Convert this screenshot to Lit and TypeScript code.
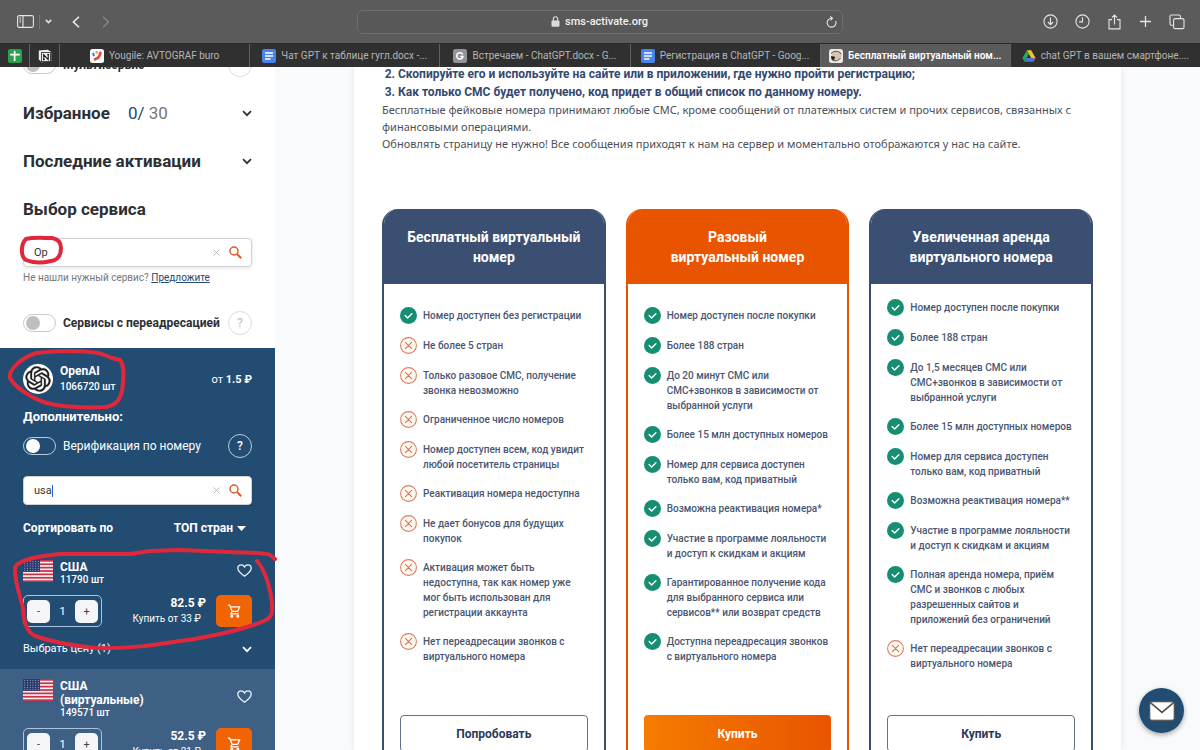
import { LitElement, html, css, svg, nothing } from "lit";
import { customElement, property } from "lit/decorators.js";

const check = html`<svg class="mark" viewBox="0 0 17 17" aria-hidden="true">
  <circle cx="8.5" cy="8.5" r="8.5" fill="#178e72" />
  <path d="M5.2 8.6l2.4 2.3 4.3-4.2" fill="none" stroke="#fff" stroke-width="1.4" stroke-linecap="round" stroke-linejoin="round" />
</svg>`;

const cross = html`<svg class="mark" viewBox="0 0 17 17" aria-hidden="true">
  <circle cx="8.5" cy="8.5" r="7.9" fill="#fffaf2" stroke="#dd7e66" stroke-width="1.1" />
  <path d="M5.4 5.4l6.2 6.2M11.6 5.4l-6.2 6.2" stroke="#dd6f52" stroke-width="1.1" stroke-linecap="round" />
</svg>`;

const chevron = html`<svg class="chevron" viewBox="0 0 10 7" aria-hidden="true">
  <path d="M1 1.2l4 4 4-4" fill="none" stroke="currentColor" stroke-width="1.7" />
</svg>`;

const flag = html`<svg class="flag" viewBox="0 0 30 22" role="img" aria-label="Флаг США">
  <rect width="30" height="22" fill="#f3eef0" />
  ${[0, 1, 2, 3, 4, 5, 6].map((i) => svg`<rect y=${i * 3.385} width="30" height="1.7" fill="#c8324a" />`)}
  <rect width="17" height="11.9" fill="#2c3a6e" />
  ${[0, 1, 2, 3, 4].map((r) =>
    [0, 1, 2, 3, 4, 5].map(
      (c) => svg`<circle cx=${1.8 + c * 2.7} cy=${1.6 + r * 2.2} r="0.5" fill="#b9c0dc" />`
    )
  )}
</svg>`;

const docsIcon = html`<svg class="fav" viewBox="0 0 14 14"><rect width="14" height="14" rx="2" fill="#4a83ea" /><path d="M3 4h8M3 7h8M3 10h5.5" stroke="#fff" stroke-width="1.5" /></svg>`;

interface Plan {
  title: string[];
  accent: boolean;
  action: string;
  items: [boolean, string][];
}

const plans: Plan[] = [
  {
    title: ["Бесплатный виртуальный", "номер"],
    accent: false,
    action: "Попробовать",
    items: [
      [true, "Номер доступен без регистрации"],
      [false, "Не более 5 стран"],
      [false, "Только разовое СМС, получение\nзвонка невозможно"],
      [false, "Ограниченное число номеров"],
      [false, "Номер доступен всем, код увидит\nлюбой посетитель страницы"],
      [false, "Реактивация номера недоступна"],
      [false, "Не дает бонусов для будущих\nпокупок"],
      [false, "Активация может быть\nнедоступна, так как номер уже\nмог быть использован для\nрегистрации аккаунта"],
      [false, "Нет переадресации звонков с\nвиртуального номера"],
    ],
  },
  {
    title: ["Разовый", "виртуальный номер"],
    accent: true,
    action: "Купить",
    items: [
      [true, "Номер доступен после покупки"],
      [true, "Более 188 стран"],
      [true, "До 20 минут СМС или\nСМС+звонков в зависимости от\nвыбранной услуги"],
      [true, "Более 15 млн доступных номеров"],
      [true, "Номер для сервиса доступен\nтолько вам, код приватный"],
      [true, "Возможна реактивация номера*"],
      [true, "Участие в программе лояльности\nи доступ к скидкам и акциям"],
      [true, "Гарантированное получение кода\nдля выбранного сервиса или\nсервисов** или возврат средств"],
      [true, "Доступна переадресация звонков\nс виртуального номера"],
    ],
  },
  {
    title: ["Увеличенная аренда", "виртуального номера"],
    accent: false,
    action: "Купить",
    items: [
      [true, "Номер доступен после покупки"],
      [true, "Более 188 стран"],
      [true, "До 1,5 месяцев СМС или\nСМС+звонков в зависимости от\nвыбранной услуги"],
      [true, "Более 15 млн доступных номеров"],
      [true, "Номер для сервиса доступен\nтолько вам, код приватный"],
      [true, "Возможна реактивация номера**"],
      [true, "Участие в программе лояльности\nи доступ к скидкам и акциям"],
      [true, "Полная аренда номера, приём\nСМС и звонков с любых\nразрешенных сайтов и\nприложений без ограничений"],
      [false, "Нет переадресации звонков с\nвиртуального номера"],
    ],
  },
];

@customElement("browser-bar")
export class BrowserBar extends LitElement {
  static styles = css`
    :host { display: block; font-family: Roboto, "Liberation Sans", sans-serif; color: #e6e6e6; }
    button { border: 0; background: none; padding: 0; margin: 0; color: inherit; font: inherit; display: flex; align-items: center; }
    svg { display: block; flex: none; }
    .toolbar { display: grid; grid-template-columns: 1fr 486px 1fr; align-items: center; height: 43px; background: #5b5b5b; }
    .left { display: flex; align-items: center; padding-left: 17px; }
    .divider { width: 1px; height: 14px; background: #737373; margin: 0 5px; }
    .drop { margin-right: 20px; }
    .back { margin-right: 22px; }
    .address { display: flex; align-items: center; height: 24px; box-sizing: border-box; border: 1px solid #6e6e6e; border-radius: 6px; background: #585858; padding: 0 5px; }
    .host { flex: 1; display: flex; justify-content: center; align-items: center; gap: 5px; padding-left: 10px; font-size: 11px; font-weight: 500; line-height: 14px; color: #f1f1f1; }
    .right { display: flex; justify-content: flex-end; align-items: center; gap: 17px; padding-right: 15px; }
    .tabs { display: flex; height: 24px; background: #303030; border-top: 1px solid #282828; box-sizing: border-box; }
    .tab { flex: 1 1 0; min-width: 0; justify-content: center; gap: 5px; border-right: 1px solid #626262; font-size: 10px; line-height: 14px; color: #b5b5b5; white-space: nowrap; overflow: hidden; }
    .tab:last-child { border-right: 0; }
    .pinned { flex: 0 0 30px; box-sizing: border-box; }
    .active { background: #5b5b5b; color: #fff; font-weight: 600; }
    .fav { width: 14px; height: 14px; }
  `;

  render() {
    return html`
      <div class="toolbar">
        <div class="left">
          <button aria-label="Боковая панель"><svg width="17" height="13" viewBox="0 0 17 13" fill="none" stroke="currentColor" stroke-width="1.1"><rect x=".6" y=".6" width="15.8" height="11.8" rx="1.6" /><path d="M6 .6v11.8M2.4 3h1.8M2.4 5h1.8M2.4 7h1.8" /></svg></button>
          <span class="divider"></span>
          <button class="drop" aria-label="Группы вкладок"><svg width="7" height="5" viewBox="0 0 7 5"><path d="M.8.9l2.7 2.7L6.2.9" fill="none" stroke="currentColor" stroke-width="1.5" /></svg></button>
          <button class="back" aria-label="Назад"><svg width="8" height="12" viewBox="0 0 8 12"><path d="M7 .8L1.4 6 7 11.2" fill="none" stroke="#f0f0f0" stroke-width="1.5" /></svg></button>
          <button aria-label="Вперёд"><svg width="8" height="12" viewBox="0 0 8 12"><path d="M1 .8L6.6 6 1 11.2" fill="none" stroke="#858585" stroke-width="1.5" /></svg></button>
        </div>
        <div class="address">
          <div class="host">
            <svg width="9" height="11" viewBox="0 0 9 11"><rect x=".5" y="4.6" width="8" height="6.2" rx="1" fill="#dcdcdc" /><path d="M2.3 5V3a2.2 2.2 0 0 1 4.4 0v2" fill="none" stroke="#dcdcdc" stroke-width="1.1" /></svg>
            <span>sms-activate.org</span>
          </div>
          <button aria-label="Обновить"><svg width="11" height="12" viewBox="0 0 11 12" fill="none" stroke="currentColor" stroke-width="1.1"><path d="M9.6 5A4.4 4.4 0 1 1 5.6 2.3M4.2.4l2.3 1.9-2 2.2" /></svg></button>
        </div>
        <div class="right">
          <button aria-label="Загрузки"><svg width="15" height="15" viewBox="0 0 15 15" fill="none" stroke="currentColor" stroke-width="1.1"><circle cx="7.5" cy="7.5" r="6.6" /><path d="M7.5 3.6v7M4.9 8l2.6 2.6L10.1 8" /></svg></button>
          <button aria-label="История"><svg width="15" height="15" viewBox="0 0 15 15" fill="none" stroke="currentColor" stroke-width="1.1"><circle cx="7.5" cy="7.5" r="6.6" /><path d="M7.5 3.2v4.7H4" /></svg></button>
          <button aria-label="Поделиться"><svg width="15" height="16" viewBox="0 0 15 16" fill="none" stroke="currentColor" stroke-width="1.1"><path d="M5 5.6H2v9.3h11V5.6h-3M7.5 10.4V1.2M4.9 3.7l2.6-2.6 2.6 2.6" /></svg></button>
          <button aria-label="Новая вкладка"><svg width="13" height="13" viewBox="0 0 13 13" stroke="currentColor" stroke-width="1.3"><path d="M6.5 1v11M1 6.5h11" /></svg></button>
          <button aria-label="Обзор вкладок"><svg width="16" height="16" viewBox="0 0 16 16" fill="none" stroke="currentColor" stroke-width="1.1"><rect x="4.6" y="4.6" width="10.4" height="10" rx="1.4" /><path d="M4.6 11.2H2.4A1.4 1.4 0 0 1 1 9.8V2.4A1.4 1.4 0 0 1 2.4 1h7.6a1.4 1.4 0 0 1 1.4 1.4v2.2" /></svg></button>
        </div>
      </div>
      <nav class="tabs" aria-label="Вкладки">
        <button class="tab pinned" aria-label="Таблицы"><svg class="fav" viewBox="0 0 14 14"><rect width="14" height="14" rx="2" fill="#2e9e4f" /><path d="M6.6 2v10M2.2 5.7h9.6" stroke="#fff" stroke-width="1.7" /></svg></button>
        <button class="tab pinned" aria-label="Заметки"><svg class="fav" viewBox="0 0 14 14"><path d="M.8 1.6L9.8.8l3.4 2.3v9.2l-9.6.9-2.8-3z" fill="#eee" /><rect x="3.4" y="3.6" width="9" height="8.8" fill="#eee" stroke="#222" stroke-width=".8" /><path d="M5.8 10.6V5.8l4.4 4.8V5.6M4.9 5.7h1.5M9.3 5.6h1.7M5 10.6h1.7" stroke="#111" fill="none" stroke-width="1.1" /></svg></button>
        <button class="tab"><svg class="fav" viewBox="0 0 14 14"><rect width="14" height="14" rx="2.5" fill="#fff" /><path d="M10.3 4c-.2 3.200-2.300 5.200-5.200 6.300" fill="none" stroke="#e5483d" stroke-width="2.8" stroke-linecap="round" /><circle cx="6.8" cy="3.4" r="1.3" fill="#f3a33c" /><path d="M3.2 4.6l.6 1.8" stroke="#3b7de0" stroke-width="2" stroke-linecap="round" /></svg><span>Yougile: AVTOGRAF buro</span></button>
        <button class="tab">${docsIcon}<span>Чат GPT к таблице гугл.docx -...</span></button>
        <button class="tab"><svg class="fav" viewBox="0 0 14 14"><rect width="14" height="14" rx="2.5" fill="#94939b" /><path d="M9.7 5.3A3.2 3.2 0 1 0 10 7.6H7.4" fill="none" stroke="#fff" stroke-width="1.5" /></svg><span>Встречаем - ChatGPT.docx - G...</span></button>
        <button class="tab">${docsIcon}<span>Регистрация в ChatGPT - Goog...</span></button>
        <button class="tab active"><svg class="fav" viewBox="0 0 14 14"><rect width="14" height="14" rx="2.5" fill="#ece7e1" /><ellipse cx="7.8" cy="6.4" rx="5" ry="4.5" fill="#d9c4b0" /><path d="M2 4.5C5 1.5 10 1.5 12.2 5M3 10.5c2 2.2 6.5 1.5 8.5-1.5" fill="none" stroke="#453c38" stroke-width=".9" /><path d="M2 7l4 .8-.8 3.2-2.7-.6z" fill="#1d1b1b" /></svg><span>Бесплатный виртуальный ном...</span></button>
        <button class="tab"><svg class="fav" viewBox="0 0 14 14"><path d="M4.8 1.2h4.4L13.6 9H9.2z" fill="#f7c02e" /><path d="M4.8 1.2L.4 9l2.2 3.8L7 5z" fill="#2ea458" /><path d="M2.6 12.8L4.8 9h8.8l-2.2 3.8z" fill="#3f7be8" /><path d="M11 9.2h2.6l-2.2 3.6z" fill="#e5483d" /></svg><span>chat GPT в вашем смартфоне....</span></button>
      </nav>`;
  }
}

@customElement("search-field")
export class SearchField extends LitElement {
  @property() value = "";
  @property() label = "";
  @property({ type: Boolean }) caret = false;

  static styles = css`
    :host { display: block; font-family: Roboto, "Liberation Sans", sans-serif; }
    .box { position: relative; display: flex; align-items: center; height: 29px; box-sizing: border-box; border: 1px solid #d3d3d3; border-radius: 4px; background: #fff; box-shadow: 0 1px 4px rgba(0, 0, 0, 0.12); padding: 0 9px 0 10px; }
    input { flex: 1; min-width: 0; border: 0; outline: 0; padding: 0; background: none; font: 11px/14px Roboto, sans-serif; color: #333; }
    .caret { position: absolute; left: 28px; top: 8px; width: 1px; height: 12px; background: #1a62d6; }
    button { border: 0; background: none; padding: 0; display: flex; }
    .clear { margin-right: 9px; }
  `;

  render() {
    return html`<div class="box">
      <input type="text" aria-label=${this.label} .value=${this.value} />
      ${this.caret ? html`<span class="caret"></span>` : nothing}
      <button class="clear" aria-label="Очистить"><svg width="7" height="7" viewBox="0 0 7 7"><path d="M.5.5l6 6M6.5.5l-6 6" stroke="#bcbcbc" /></svg></button>
      <button aria-label="Найти"><svg width="13" height="13" viewBox="0 0 13 13" fill="none" stroke="#e0592a"><circle cx="5" cy="5" r="4" stroke-width="1.5" /><path d="M8 8l4.2 4.2" stroke-width="2" /></svg></button>
    </div>`;
  }
}

@customElement("country-offer")
export class CountryOffer extends LitElement {
  @property({ attribute: false }) name: string[] = [];
  @property() stock = "";
  @property() price = "";
  @property() from = "";
  @property() choice = "";

  static styles = css`
    :host { display: block; padding: 10px 23px 12px; font-family: Roboto, "Liberation Sans", sans-serif; font-size: 11px; color: #fff; }
    svg { display: block; flex: none; }
    button { border: 0; background: none; padding: 0; color: inherit; font: inherit; cursor: pointer; }
    .top { display: flex; align-items: center; gap: 7px; }
    .flag { width: 30px; height: 22px; align-self: flex-start; }
    .info { flex: 1; }
    .like { padding-bottom: 6px; }
    .name { font-size: 12px; line-height: 14px; font-weight: 700; }
    .stock { font-size: 10px; line-height: 12px; font-weight: 500; }
    .buy { display: flex; align-items: center; margin-top: 9px; }
    .stepper { display: flex; align-items: center; width: 79px; height: 32px; box-sizing: border-box; border: 1px solid #a9c4dd; border-radius: 5px; padding: 0 3px; }
    .stepper button { width: 23px; height: 23px; border-radius: 5px; background: #f5f5f7; color: #444; }
    .stepper output { flex: 1; text-align: center; }
    .prices { flex: 1; text-align: right; margin-right: 10px; }
    .price { font-size: 12px; line-height: 16px; font-weight: 700; }
    .from { font-size: 10px; line-height: 16px; margin-right: 5px; }
    .cart { width: 36px; height: 32px; border-radius: 5px; background: #f06404; display: flex; align-items: center; justify-content: center; }
    .choice { display: flex; justify-content: space-between; align-items: center; width: 100%; margin-top: 14px; line-height: 16px; }
    .chevron { width: 10px; height: 7px; }
  `;

  render() {
    return html`
      <div class="top">
        ${flag}
        <div class="info">
          ${this.name.map((line) => html`<div class="name">${line}</div>`)}
          <div class="stock">${this.stock}</div>
        </div>
        <button class="like" aria-label="В избранное"><svg width="15" height="13" viewBox="0 0 15 13"><path d="M7.5 12.2C3.5 9.4.8 7.2.8 4.2.8 2.2 2.3.8 4.1.8c1.4 0 2.7.8 3.4 2.1C8.2 1.6 9.500.8 10.9.8c1.8 0 3.3 1.4 3.3 3.4 0 3-2.7 5.2-6.7 8z" fill="none" stroke="#e9f0f6" stroke-width="1.3" /></svg></button>
      </div>
      <div class="buy">
        <div class="stepper"><button aria-label="Меньше">-</button><output>1</output><button aria-label="Больше">+</button></div>
        <div class="prices">
          <div class="price">${this.price}</div>
          <div class="from">${this.from}</div>
        </div>
        <button class="cart" aria-label="В корзину"><svg width="14" height="14" viewBox="0 0 14 14" fill="none" stroke="#fff" stroke-width="1.2"><path d="M.8 1.2h1.9l2.5 6.2h5.5l2-4.6H3.4M5.2 7.4l-1.4 2.4h8" /><circle cx="4.8" cy="12.2" r=".9" /><circle cx="10.8" cy="12.2" r=".9" /></svg></button>
      </div>
      ${this.choice ? html`<button class="choice"><span>${this.choice}</span>${chevron}</button>` : nothing}
    `;
  }
}

@customElement("app-root")
export class AppRoot extends LitElement {
  static styles = css`
    :host { display: flex; flex-direction: column; height: 100vh; overflow: hidden; position: relative; font-family: Roboto, "Liberation Sans", sans-serif; font-size: 11px; color: #2d2f33; background: #fff; }
    svg { display: block; flex: none; }
    button { border: 0; background: none; padding: 0; color: inherit; font: inherit; cursor: pointer; }
    .page { flex: 1; min-height: 0; display: flex; overflow: hidden; background: #f8fafc; }
    .sidebar { flex: 0 0 275px; background: #fff; overflow: hidden; }
    .filters { display: flow-root; padding: 0 23px; height: 281px; }
    .row { display: flex; align-items: center; height: 24px; gap: 7px; }
    .row label { flex: 1; font-size: 12px; font-weight: 700; white-space: nowrap; }
    .scrolled { margin-top: -14px; }
    .toggle { appearance: none; flex: none; width: 33px; height: 18px; margin: 0; border: 1px solid #c9c9c9; border-radius: 9px; display: flex; align-items: center; padding: 0 2px; box-sizing: border-box; }
    .toggle::before { content: ""; width: 14px; height: 14px; border-radius: 50%; background: #bfbfbf; }
    .help { width: 24px; height: 24px; box-sizing: border-box; border: 1px solid #dedede; border-radius: 50%; color: #c6c6c6; font-size: 12px; font-weight: 500; flex: none; }
    .section { display: flex; align-items: center; width: 100%; height: 24px; margin-top: 24px; text-align: left; }
    h2 { margin: 0; font-size: 17px; line-height: 24px; font-weight: 700; }
    .count { margin-left: 18px; font-size: 17px; color: #777; }
    .count b { font-weight: 400; color: #23496e; }
    .section .chevron { margin-left: auto; }
    .chevron { width: 10px; height: 7px; }
    .service-search { margin-top: 17px; }
    .hint { margin: 4px 0 26px; font-size: 10px; line-height: 14px; color: #777; }
    .hint a { color: #23496e; }
    .panel { background: #234c72; color: #fff; padding: 15px 23px 0; height: 202px; box-sizing: border-box; }
    .service { display: flex; align-items: center; gap: 7px; }
    .service-info { flex: 1; }
    .service-name { font-size: 12px; line-height: 16px; font-weight: 700; }
    .service-stock { font-size: 10px; line-height: 16px; font-weight: 500; }
    .extra { margin: 14px 0 9px; font-size: 13px; line-height: 16px; font-weight: 700; }
    .panel .row label { font-weight: 400; }
    .panel .toggle { border-color: #b9cde0; }
    .panel .toggle::before { background: #fff; }
    .panel .help { border-color: #b9cde0; color: #fff; }
    .country-search { margin-top: 18px; }
    .sort { display: flex; justify-content: space-between; align-items: center; margin-top: 15px; padding-right: 6px; font-size: 12px; line-height: 16px; font-weight: 700; }
    .sort button { display: flex; align-items: center; gap: 4px; }
    .offer { background: #234c72; }
    .offer-alt { background: #3d6084; }
    .content { flex: 1; min-width: 0; padding: 0 79px; }
    .paper { background: #fff; box-shadow: 0 0 6px rgba(40, 60, 90, 0.1); padding: 0 28px; height: 100%; box-sizing: border-box; color: #4b5058; }
    .steps { margin: 0; padding-left: 16px; color: #34496f; font-size: 12px; font-weight: 700; line-height: 18px; }
    .intro { overflow: hidden; }
    .steps li:first-child { margin-top: -2px; }
    .intro p { margin: 0; font-family: "Noto Sans", sans-serif; font-size: 11px; line-height: 17px; }
    .plans { display: grid; grid-template-columns: repeat(3, minmax(0, 1fr)); gap: 20px; margin-top: 57px; }
    .plan { display: flex; flex-direction: column; height: 600px; box-sizing: border-box; border: 2px solid #3b4f72; border-top: 0; border-radius: 16px 16px 0 0; overflow: hidden; }
    .plan-accent { border-color: #e95400; }
    .plan-head { margin: 0 -2px; padding: 18px 0 17px; background: #3b4f72; color: #fff; text-align: center; }
    .plan-accent .plan-head { background: #e95400; }
    .plan-head h3 { margin: 0; font-size: 14px; line-height: 20px; font-weight: 700; }
    .features { list-style: none; margin: 0; padding: 0 0 0 16px; height: 402px; display: flex; flex-direction: column; justify-content: center; gap: 13px; color: #4a5672; font-size: 10px; font-weight: 500; }
    .features li { display: flex; gap: 6px; }
    .mark { width: 17px; height: 17px; }
    .features span { padding-top: 1px; line-height: 15px; white-space: pre; }
    .action { margin: 29px 16px 0; height: 37px; border: 1px solid #66708a; border-radius: 4px; background: #fff; color: #2c3a5c; font-size: 12px; font-weight: 700; }
    .plan-accent .action { border: 0; color: #fff; background: linear-gradient(90deg, #f57c00, #e95400); }
    .mail { position: absolute; right: 16px; bottom: 17px; width: 45px; height: 45px; border-radius: 50%; background: #234c72; box-shadow: 0 2px 5px rgba(0, 0, 0, 0.35); display: flex; align-items: center; justify-content: center; }
    .notes { position: absolute; left: 0; top: 0; width: 280px; height: 750px; pointer-events: none; }
  `;

  private renderPlan(plan: Plan) {
    return html`<article class="plan ${plan.accent ? "plan-accent" : ""}">
      <header class="plan-head"><h3>${plan.title[0]}<br />${plan.title[1]}</h3></header>
      <ul class="features">
        ${plan.items.map(([ok, text]) => html`<li>${ok ? check : cross}<span>${text}</span></li>`)}
      </ul>
      <button class="action">${plan.action}</button>
    </article>`;
  }

  render() {
    return html`
      <browser-bar></browser-bar>
      <div class="page">
        <aside class="sidebar">
          <div class="filters">
            <div class="row scrolled">
              <input class="toggle" type="checkbox" id="multi" /><label for="multi">Мультисервис</label>
              <button class="help" aria-label="Справка"></button>
            </div>
            <button class="section"><h2>Избранное</h2><span class="count"><b>0/</b> 30</span>${chevron}</button>
            <button class="section"><h2>Последние активации</h2>${chevron}</button>
            <div class="section"><h2>Выбор сервиса</h2></div>
            <search-field class="service-search" label="Поиск сервиса" value="Op"></search-field>
            <p class="hint">Не нашли нужный сервис? <a href="#">Предложите</a></p>
            <div class="row">
              <input class="toggle" type="checkbox" id="forward" /><label for="forward">Сервисы с переадресацией</label>
              <button class="help" aria-label="Справка">?</button>
            </div>
          </div>
          <section class="panel">
            <div class="service">
              <svg width="30" height="30" viewBox="0 0 30 30" role="img" aria-label="OpenAI">
                <circle cx="15" cy="15" r="15" fill="#fff" />
                <path transform="translate(2.4 2.4) scale(1.05)" fill="#1c1c1c" stroke="#1c1c1c" stroke-width=".3" d="M22.2819 9.8211a5.9847 5.9847 0 0 0-.5157-4.9108 6.0462 6.0462 0 0 0-6.5098-2.9A6.0651 6.0651 0 0 0 4.9807 4.1818a5.9847 5.9847 0 0 0-3.9977 2.9 6.0462 6.0462 0 0 0 .7427 7.0966 5.98 5.98 0 0 0 .511 4.9107 6.051 6.051 0 0 0 6.5146 2.9001A5.9847 5.9847 0 0 0 13.2599 24a6.0557 6.0557 0 0 0 5.7718-4.2058 5.9894 5.9894 0 0 0 3.9977-2.9001 6.0557 6.0557 0 0 0-.7475-7.0729zm-9.022 12.6081a4.4755 4.4755 0 0 1-2.8764-1.0408l.1419-.0804 4.7783-2.7582a.7948.7948 0 0 0 .3927-.6813v-6.7369l2.02 1.1686a.071.071 0 0 1 .038.052v5.5826a4.504 4.504 0 0 1-4.4945 4.4944zm-9.6607-4.1254a4.4708 4.4708 0 0 1-.5346-3.0137l.142.0852 4.783 2.7582a.7712.7712 0 0 0 .7806 0l5.8428-3.3685v2.3324a.0804.0804 0 0 1-.0332.0615L9.74 19.9502a4.4992 4.4992 0 0 1-6.1408-1.6464zM2.3408 7.8956a4.485 4.485 0 0 1 2.3655-1.9728V11.6a.7664.7664 0 0 0 .3879.6765l5.8144 3.3543-2.0201 1.1685a.0757.0757 0 0 1-.071 0l-4.8303-2.7865A4.504 4.504 0 0 1 2.3408 7.872zm16.5963 3.8558L13.1038 8.364 15.1192 7.2a.0757.0757 0 0 1 .071 0l4.8303 2.7913a4.4944 4.4944 0 0 1-.6765 8.1042v-5.6772a.79.79 0 0 0-.407-.667zm2.0107-3.0231l-.142-.0852-4.7735-2.7818a.7759.7759 0 0 0-.7854 0L9.409 9.2297V6.8974a.0662.0662 0 0 1 .0284-.0615l4.8303-2.7866a4.4992 4.4992 0 0 1 6.6802 4.66zM8.3065 12.863l-2.02-1.1638a.0804.0804 0 0 1-.038-.0567V6.0742a4.4992 4.4992 0 0 1 7.3757-3.4537l-.142.0805L8.704 5.459a.7948.7948 0 0 0-.3927.6813zm1.0976-2.3654l2.602-1.4998 2.6069 1.4998v2.9994l-2.5974 1.4997-2.6067-1.4997Z" />
              </svg>
              <div class="service-info">
                <div class="service-name">OpenAI</div>
                <div class="service-stock">1066720 шт</div>
              </div>
              <div>от <b>1.5 ₽</b></div>
            </div>
            <h4 class="extra">Дополнительно:</h4>
            <div class="row">
              <input class="toggle" type="checkbox" id="verify" /><label for="verify">Верификация по номеру</label>
              <button class="help" aria-label="Справка">?</button>
            </div>
            <search-field class="country-search" label="Поиск страны" value="usa" caret></search-field>
            <div class="sort">
              <span>Сортировать по</span>
              <button>ТОП стран <svg width="9" height="5" viewBox="0 0 9 5"><path d="M0 0h9L4.5 5z" fill="#fff" /></svg></button>
            </div>
          </section>
          <country-offer class="offer" .name=${["США"]} stock="11790 шт" price="82.5 ₽" from="Купить от 33 ₽" choice="Выбрать цену (1)"></country-offer>
          <country-offer class="offer-alt" .name=${["США", "(виртуальные)"]} stock="149571 шт" price="52.5 ₽" from="Купить от 21 ₽"></country-offer>
        </aside>
        <main class="content">
          <div class="paper">
            <div class="intro">
              <ol class="steps" start="2">
                <li>Скопируйте его и используйте на сайте или в приложении, где нужно пройти регистрацию;</li>
                <li>Как только СМС будет получено, код придет в общий список по данному номеру.</li>
              </ol>
              <p>Бесплатные фейковые номера принимают любые СМС, кроме сообщений от платежных систем и прочих сервисов, связанных с финансовыми операциями.</p>
              <p>Обновлять страницу не нужно! Все сообщения приходят к нам на сервер и моментально отображаются у нас на сайте.</p>
            </div>
            <div class="plans">${plans.map((p) => this.renderPlan(p))}</div>
          </div>
        </main>
      </div>
      <button class="mail" aria-label="Написать нам"><svg width="26" height="20" viewBox="0 0 26 20"><rect x=".8" y=".8" width="24.4" height="18.4" rx="2" fill="#fff" stroke="#5a4a42" stroke-width="1" /><path d="M1.4 1.6L13 11.4 24.6 1.6" fill="none" stroke="#5a4a42" stroke-width="1.5" /></svg></button>
      <svg class="notes" viewBox="0 0 280 750" fill="none" stroke="#e0283c" stroke-width="4" stroke-linecap="round" stroke-linejoin="round" aria-hidden="true">
        <path d="M26 239C33 237 44 238 52 238C58 239 61 242 61 248C61 255 58 260 51 261C43 263 33 263 26 260C20 256 21 244 26 239Z" />
        <path d="M36 353C60 350 85 351 99 353L112 358L120 360C124 364 124 378 122 391C120 400 116 405 106 407C85 408 62 407 47 403C30 398 14 386 10 378C8 370 21 358 36 353" />
        <path d="M275 559L270 555C262 552 245 553 230 552L180 550L150 551L130 554L60 554C40 556 20 559 15 567C14 580 20 595 23 608C24 622 26 631 35 636C55 643 75 646 95 648C130 649 155 645 180 641C205 638 235 631 250 626C262 622 271 620 272 612C273 598 267 572 257 561" />
      </svg>`;
  }
}
